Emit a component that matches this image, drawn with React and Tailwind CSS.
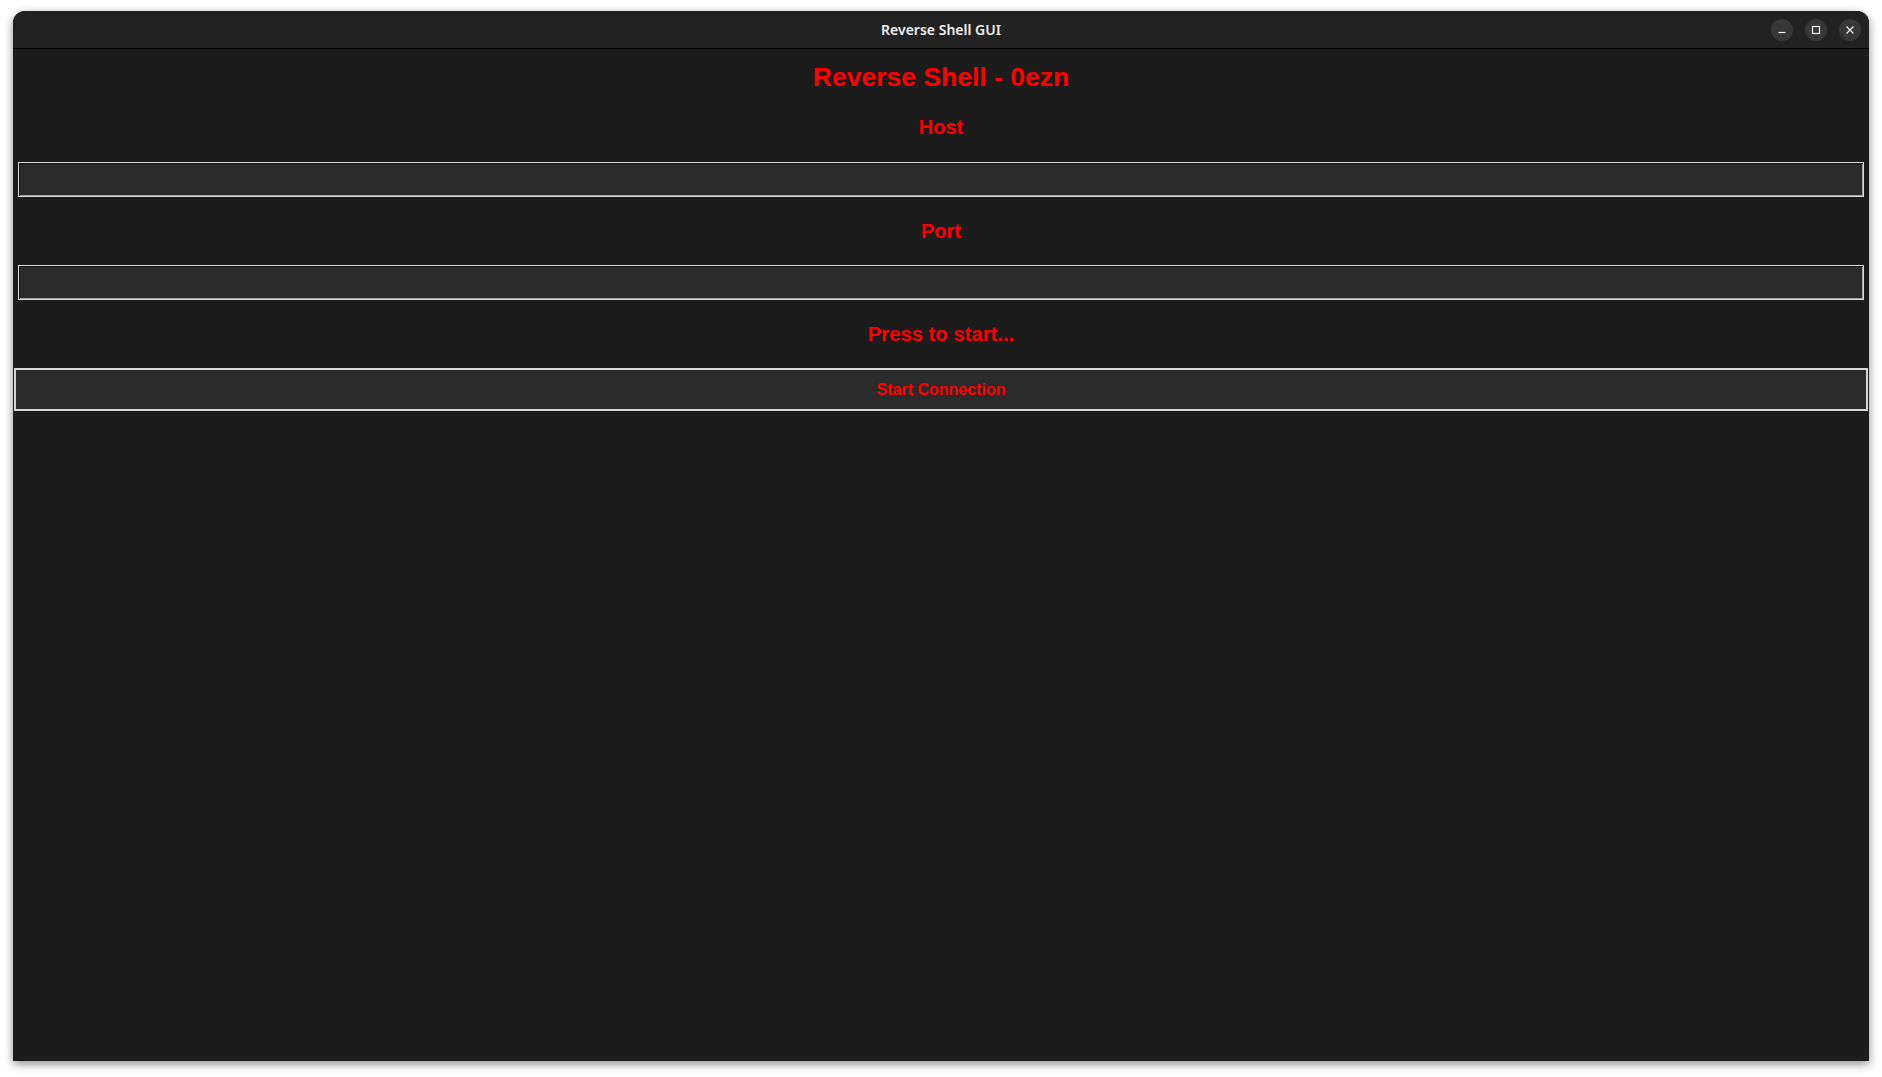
import { useState } from "react";

const TitleButton = ({ children }) => (
    <div className="w-[22px] h-[22px] rounded-full bg-[#373737] flex items-center justify-center text-[#f2f2f2]">
        {children}
    </div>
);

const Field = ({ value, onChange }) => (
    <input
        value={value}
        onChange={(e) => onChange(e.target.value)}
        className="mx-[5px] mt-[22px] h-[35px] bg-[#2b2b2b] border border-[#dcdcdc] shadow-[inset_1px_1px_0_#151515,inset_-1px_-1px_0_#a3a3a3] px-2 text-white outline-none font-['Liberation_Sans',sans-serif] text-[14px]"
    />
);

const App = () => {
    const [host, setHost] = useState("");
    const [port, setPort] = useState("");
    const [status, setStatus] = useState("Press to start...");

    return (
        <div className="w-screen h-screen bg-white pt-[11px] px-[13px] overflow-hidden">
            <div className="w-[1856px] h-[1050px] flex flex-col bg-[#1c1c1c] rounded-t-[12px] shadow-[0_3px_10px_rgba(0,0,0,0.45)]">
                {/* title bar */}
                <div className="relative h-[38px] bg-[#222222] rounded-t-[12px] border-b border-black flex items-center justify-center">
                    <span className="text-[14px] font-semibold text-[#f0f0f0] font-['Noto_Sans',sans-serif]">
                        Reverse Shell GUI
                    </span>
                    <div className="absolute right-[8px] top-[8px] flex gap-[12px]">
                        <TitleButton>
                            <svg width="10" height="10" viewBox="0 0 10 10">
                                <path d="M1.5 7.5h7" stroke="currentColor" strokeWidth="1.2" />
                            </svg>
                        </TitleButton>
                        <TitleButton>
                            <svg width="10" height="10" viewBox="0 0 10 10">
                                <rect x="1.5" y="1.5" width="7" height="7" fill="none" stroke="currentColor" strokeWidth="1.2" />
                            </svg>
                        </TitleButton>
                        <TitleButton>
                            <svg width="10" height="10" viewBox="0 0 10 10">
                                <path d="M1.5 1.5l7 7M8.5 1.5l-7 7" stroke="currentColor" strokeWidth="1.2" />
                            </svg>
                        </TitleButton>
                    </div>
                </div>

                {/* form */}
                <div className="flex flex-col font-['Liberation_Sans',Arial,sans-serif] font-bold text-[#ff0000]">
                    <h1 className="mt-[12px] text-center text-[26.5px] leading-[32px]">Reverse Shell - 0ezn</h1>
                    <p className="mt-[22px] text-center text-[20px] leading-[24px]">Host</p>
                    <div className="flex flex-col mt-[1px]">
                        <Field value={host} onChange={setHost} />
                    </div>
                    <p className="mt-[22px] text-center text-[20px] leading-[24px]">Port</p>
                    <Field value={port} onChange={setPort} />
                    <p className="mt-[22px] text-center text-[20.3px] leading-[24px]">{status}</p>
                    <button
                        onClick={() => setStatus(`Connecting to ${host}:${port}...`)}
                        className="mx-[1px] mt-[22px] h-[43px] bg-[#2b2b2b] border-2 border-[#d6d6d6] text-[16px] text-[#ff0000] font-bold"
                    >
                        Start Connection
                    </button>
                </div>
            </div>
        </div>
    );
};

export default App;
